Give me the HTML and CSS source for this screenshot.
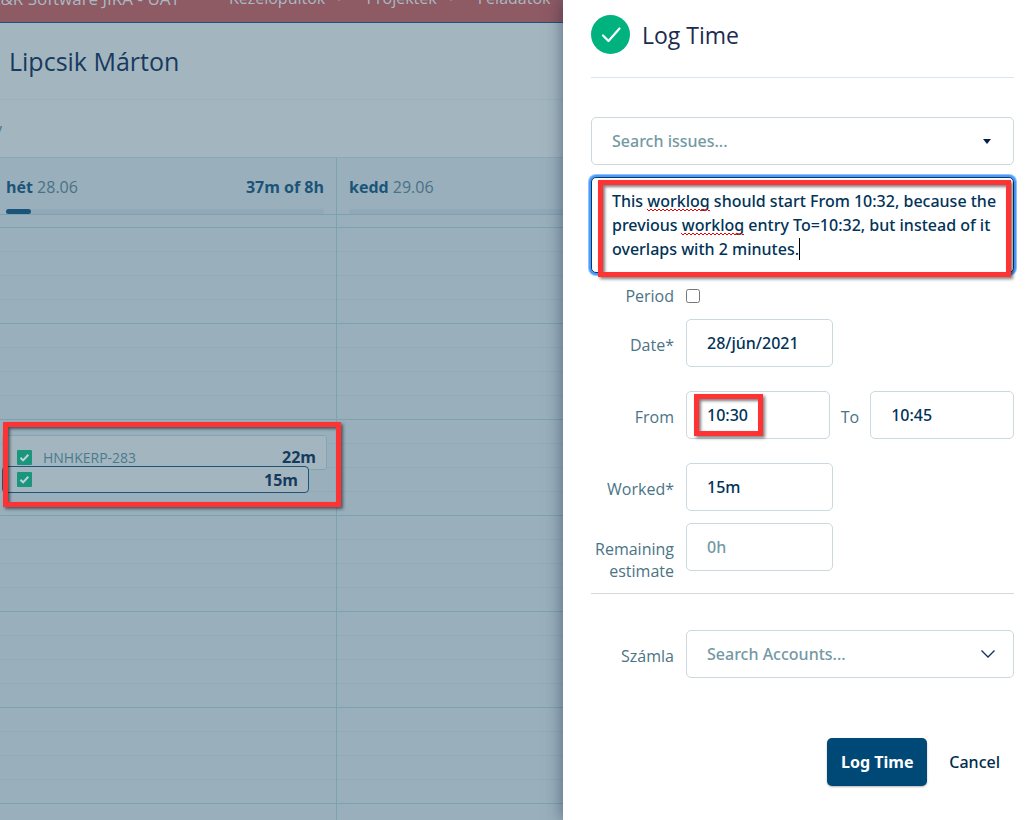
FILE: index.html
```html
<!DOCTYPE html>
<html lang="hu">
<head>
    <meta charset="UTF-8">
    <meta name="viewport" content="width=device-width, initial-scale=1.0">
    <title>Log Time</title>
    <link rel="stylesheet" href="styles.css">
</head>
<body>
    <div class="board">
        <nav class="topnav">
            <a href="#" class="brand">K&amp;R Software JIRA - UAT</a>
            <a href="#" class="menu">Kezelőpultok <svg viewBox="0 0 8 5" width="8" height="5"><path d="M0 0h8L4 5z"/></svg></a>
            <a href="#" class="menu">Projektek <svg viewBox="0 0 8 5" width="8" height="5"><path d="M0 0h8L4 5z"/></svg></a>
            <a href="#" class="menu">Feladatok <svg viewBox="0 0 8 5" width="8" height="5"><path d="M0 0h8L4 5z"/></svg></a>
        </nav>
        <header class="user">
            <h1>Lipcsik Márton</h1>
        </header>
        <div class="toolbar"><span class="view">y</span></div>
        <div class="days">
            <section class="day">
                <div class="day-head">
                    <div class="day-title">
                        <span><b>hét</b> 28.06</span>
                        <b>37m of 8h</b>
                    </div>
                    <div class="bar"><div class="bar-fill" style="width: 8%"></div></div>
                </div>
                <div class="hours">
                    <div class="logs">
                        <article class="log">
                            <svg class="tick" viewBox="0 0 15 15" width="15" height="15"><rect width="15" height="15" rx="1"/><path d="M3.5 7.8l2.6 2.6 5.2-5.6"/></svg>
                            <span class="key">HNHKERP-283</span>
                            <b>22m</b>
                        </article>
                        <article class="log selected">
                            <svg class="tick" viewBox="0 0 15 15" width="15" height="15"><rect width="15" height="15" rx="1"/><path d="M3.5 7.8l2.6 2.6 5.2-5.6"/></svg>
                            <b>15m</b>
                        </article>
                        <div class="mark mark-logs"></div>
                    </div>
                </div>
            </section>
            <section class="day">
                <div class="day-head">
                    <div class="day-title">
                        <span><b>kedd</b> 29.06</span>
                    </div>
                    <div class="bar"></div>
                </div>
                <div class="hours"></div>
            </section>
        </div>
    </div>

    <form class="drawer">
        <header class="drawer-head">
            <svg viewBox="0 0 39 39" width="39" height="39"><circle cx="19.5" cy="19.5" r="19.5" fill="#00b37e"/><path d="M12 20.5l5.500 5.500L28.500 13.500" fill="none" stroke="#fff" stroke-width="2.200" stroke-linecap="round" stroke-linejoin="round"/></svg>
            <h2>Log Time</h2>
        </header>

        <div class="picker issue">
            <input type="text" placeholder="Search issues..." aria-label="Search issues">
            <svg viewBox="0 0 8 5" width="8" height="5"><path d="M0 0h8L4 5z" fill="#012046"/></svg>
        </div>

        <div class="description">
            <textarea aria-label="Description" spellcheck="false">This worklog should start From 10:32, because the previous worklog entry To=10:32, but instead of it overlaps with 2 minutes.</textarea>
            <i class="typo typo-first"></i>
            <i class="typo typo-second"></i>
            <i class="caret"></i>
            <div class="mark mark-description"></div>
        </div>

        <div class="row period">
            <label for="period">Period</label>
            <input type="checkbox" id="period">
        </div>
        <div class="row date">
            <label for="date">Date*</label>
            <input type="text" id="date" class="short" value="28/jún/2021">
        </div>
        <div class="row times">
            <label for="from">From</label>
            <div class="time">
                <input type="text" id="from" value="10:30">
                <div class="mark mark-from"></div>
            </div>
            <label for="to" class="to">To</label>
            <div class="time">
                <input type="text" id="to" value="10:45">
            </div>
        </div>
        <div class="row">
            <label for="worked">Worked*</label>
            <input type="text" id="worked" class="short" value="15m">
        </div>
        <div class="row remaining">
            <label for="remaining">Remaining estimate</label>
            <input type="text" id="remaining" class="short" placeholder="0h">
        </div>

        <div class="row account">
            <label for="account">Számla</label>
            <div class="picker">
                <input type="text" id="account" placeholder="Search Accounts...">
                <svg viewBox="0 0 14 8" width="14" height="8"><path d="M.5 .5L7 7L13.500 .5" fill="none" stroke="#12305a" stroke-width="1.300"/></svg>
            </div>
        </div>

        <footer class="actions">
            <button type="submit" class="primary">Log Time</button>
            <button type="button" class="cancel">Cancel</button>
        </footer>
    </form>
</body>
</html>
```
FILE: styles.css
```css
* {
    box-sizing: border-box;
}

html, body {
    height: 100%;
}

body {
    margin: 0;
    display: flex;
    overflow: hidden;
    font-family: "Open Sans", "Noto Sans", sans-serif;
    font-size: 16px;
    color: #013d68;
    background: #a3b6bf;
}

h1, h2 {
    margin: 0;
    font-weight: 400;
    line-height: 32px;
}

/* board behind the drawer */
.board {
    flex: 1;
    min-width: 0;
    display: flex;
    flex-direction: column;
    overflow: hidden;
}

.topnav {
    display: flex;
    flex: none;
    align-items: center;
    gap: 23px;
    height: 48px;
    margin-top: -25px;
    padding-bottom: 1px;
    background: #8e5a64;
    border-bottom: 1px solid #1f5377;
    white-space: nowrap;
}

.topnav a {
    color: #a9b9c2;
    text-decoration: none;
}

.topnav svg {
    fill: #a9b9c2;
    margin-left: 6px;
    vertical-align: 3px;
}

.topnav .brand {
    margin-left: -10px;
    margin-right: 26px;
    font-size: 17px;
}

.user {
    flex: none;
    height: 77px;
    padding: 22px 9px 0;
    border-bottom: 1px solid #99afba;
}

.user h1 {
    font-size: 25px;
    color: #173a5e;
}

.toolbar {
    flex: none;
    height: 57px;
    padding-top: 18px;
    overflow: hidden;
}

.view {
    margin-left: -6px;
    color: #4a7a90;
}

.days {
    flex: 1;
    display: grid;
    grid-template-columns: 337px 337px;
    border-top: 1px solid #8ca8b4;
    background: #99afbb;
}

.day {
    display: flex;
    flex-direction: column;
    border-right: 1px solid #7ea1af;
}

.day-head {
    height: 57px;
    padding: 17px 12px 0;
    border-bottom: 1px solid #7ea1af;
}

.day:first-child .day-head {
    padding-left: 6px;
}

.day-title {
    display: flex;
    justify-content: space-between;
    line-height: 24px;
    color: #4a7187;
}

.day-title b {
    color: #1b5479;
}

.bar {
    height: 5px;
    margin-top: 10px;
    border-radius: 3px;
    background: #90a8b7;
}

.bar-fill {
    height: 5px;
    border-radius: 3px;
    background: #1b5479;
}

/* one strong line per hour, three light ones between */
.hours {
    flex: 1;
    margin-top: 12px;
    background:
        repeating-linear-gradient(#7ea1af 0 1px, transparent 1px 96px),
        repeating-linear-gradient(#90aab6 0 1px, transparent 1px 24px);
}

.logs {
    position: relative;
    padding-top: 208px;
}

.log {
    display: flex;
    align-items: flex-end;
    width: 325px;
    height: 35px;
    margin-left: 2px;
    padding: 0 10px 4px 14px;
    background: #a3b6bf;
    border: 1px solid #83a5b3;
    border-radius: 3px;
}

.log b {
    margin-left: auto;
    line-height: 16px;
    color: #163a5e;
}

.log.selected {
    position: relative;
    align-items: center;
    width: 307px;
    height: 27px;
    margin-top: -4px;
    padding-bottom: 0;
    border: 1px solid #1f5377;
    border-radius: 4px;
}

.key {
    margin-left: 11px;
    font-size: 14px;
    line-height: 14px;
    color: #4a7a90;
}

.tick {
    fill: #1a967e;
}

.tick path {
    fill: none;
    stroke: #c1d3d6;
    stroke-width: 2;
}

/* red highlight frames */
.mark {
    position: absolute;
    border: 5px solid #ff3333;
    box-shadow: 2px 2px 3px rgba(0, 0, 0, .5), inset 2px 2px 3px rgba(0, 0, 0, .5);
    pointer-events: none;
}

.mark-logs {
    top: 195px;
    left: 3px;
    width: 338px;
    height: 85px;
    z-index: 1;
}

.mark-description {
    inset: 3px 3px -4px 7px;
}

.mark-from {
    top: 3px;
    left: 8px;
    width: 69px;
    height: 42px;
}

/* drawer */
.drawer {
    position: relative;
    z-index: 2;
    flex: none;
    width: 473px;
    padding: 15px 22px 34px 28px;
    background: #fff;
    box-shadow: 0 0 16px rgba(9, 30, 66, .5);
    display: flex;
    flex-direction: column;
}

.drawer-head {
    display: flex;
    gap: 12px;
    height: 63px;
    margin-bottom: 39px;
    border-bottom: 1px solid #dbe6ec;
}

.drawer-head h2 {
    font-size: 23px;
    line-height: 40px;
    color: #1b2c50;
}

input, textarea, button {
    font-family: "Noto Sans", "Open Sans", sans-serif;
    font-size: 16px;
    font-weight: 500;
    color: #013358;
}

input[type="text"], textarea {
    width: 100%;
    height: 48px;
    padding: 0 20px;
    border: 1px solid #cbd8dd;
    border-radius: 5px;
    background: #fff;
    outline: none;
}

input::placeholder {
    color: #7499a3;
    opacity: 1;
}

.picker {
    display: flex;
    align-items: center;
    flex: 1;
}

.picker svg {
    margin-left: -33px;
    margin-right: 19px;
    flex: none;
}

.issue {
    flex: none;
    margin-bottom: 12px;
}

.issue svg {
    margin-left: -31px;
    margin-right: 23px;
}

.description {
    position: relative;
    margin-bottom: 12px;
}

.description textarea {
    display: block;
    height: 96px;
    padding: 11px 12px 12px 20px;
    line-height: 24px;
    resize: none;
    overflow: hidden;
    border-color: #013d68;
    box-shadow: 0 0 0 2px #4c9aff, 0 0 0 3px #94c2ff;
}

.typo {
    position: absolute;
    height: 4px;
    width: 63px;
    background: radial-gradient(circle at 2px 0, transparent 1px, #e00 1px 2px, transparent 2px) 0 0 / 4px 4px;
}

.typo-first {
    top: 32px;
    left: 56px;
}

.typo-second {
    top: 56px;
    left: 90px;
}

.caret {
    position: absolute;
    top: 61px;
    left: 208px;
    width: 1px;
    height: 22px;
    background: #000;
}

.row {
    display: flex;
    margin-bottom: 12px;
}

.row label {
    flex: none;
    width: 83px;
    margin-right: 12px;
    padding-top: 15px;
    line-height: 22px;
    text-align: right;
    color: #4a7485;
}

.row .short {
    width: 147px;
}

.period {
    align-items: center;
}

.period label {
    padding-top: 0;
}

.period input {
    width: 14px;
    height: 14px;
    margin: 0;
}

.date, .times {
    margin-bottom: 24px;
}

.time {
    position: relative;
    flex: 1;
    min-width: 0;
}

.times .to {
    width: auto;
    margin: 0 11px;
}

.remaining {
    margin-bottom: 0;
    padding-bottom: 11px;
    border-bottom: 1px solid #d3d9dc;
}

.account {
    margin-top: 36px;
    margin-bottom: 60px;
}

.actions {
    display: flex;
    justify-content: flex-end;
}

.actions button {
    height: 48px;
    border: 0;
    border-radius: 5px;
    background: none;
    cursor: pointer;
}

.actions .primary {
    width: 100px;
    padding: 0;
    font-weight: 700;
    color: #fff;
    background: #004977;
    box-shadow: 0 1px 2px rgba(0, 0, 0, .3);
}

.actions .cancel {
    padding: 0 14px 0 22px;
    color: #012b4b;
}
```
